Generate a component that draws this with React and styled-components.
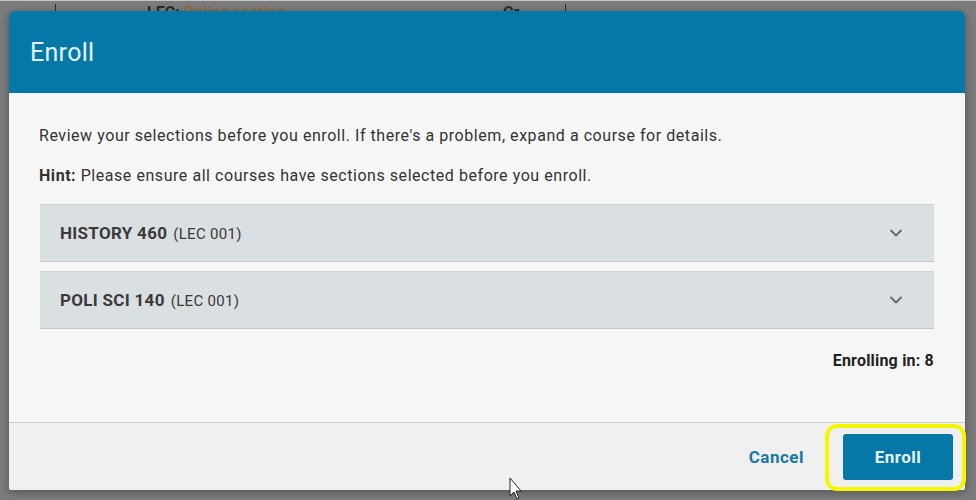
import React from 'react'
import styled, { createGlobalStyle } from 'styled-components'
import { ChevronDown } from 'lucide-react'

const GlobalStyle = createGlobalStyle`
  body {
    margin: 0;
    background: #7b7b7b;
    font-family: Roboto, "Liberation Sans", sans-serif;
  }
`

const Screen = styled.div`
  position: relative;
  width: 976px;
  height: 500px;
  overflow: hidden;
  background: #7c7c7c;
  border-top: 1px solid #c4c4c4;
  box-sizing: border-box;
`

const BehindRow = styled.div`
  display: grid;
  grid-template-columns: 55px 92px 356px 62px 1fr;
  height: 20px;
  padding-top: 3px;
  font-size: 16px;
  line-height: 18px;
`

const BehindCell = styled.div`
  border-left: ${p => (p.$line ? '1px solid #2e2e2e' : 'none')};
  color: #2a2a2a;
  font-weight: ${p => (p.$bold ? 700 : 400)};
  white-space: nowrap;
`

const Orange = styled.span`
  color: #9c6424;
  font-weight: 400;
`

const Dialog = styled.div`
  position: absolute;
  left: 9px;
  top: 10px;
  width: 956px;
  height: 479px;
  display: flex;
  flex-direction: column;
  border-radius: 6px 6px 2px 2px;
  overflow: hidden;
  box-shadow: 0 2px 10px rgba(0, 0, 0, 0.35);
`

const Header = styled.div`
  height: 82px;
  flex: none;
  display: flex;
  align-items: center;
  padding-left: 21px;
  background: #0578a8;
`

const Title = styled.h2`
  margin: 0;
  font-size: 25px;
  font-weight: 400;
  letter-spacing: 0.3px;
  color: #e4f3f9;
`

const Body = styled.div`
  flex: 1;
  background: #f7f7f7;
  padding: 33px 31px 0 30px;
  color: #333;
`

const Text = styled.p`
  margin: 0 0 ${p => p.$mb}px;
  font-size: 16px;
  line-height: 20px;
  letter-spacing: 0.55px;
`

const CourseList = styled.div`
  display: flex;
  flex-direction: column;
  gap: 9px;
  margin-left: 1px;
`

const CourseRow = styled.div`
  height: 58px;
  box-sizing: border-box;
  display: flex;
  align-items: center;
  justify-content: space-between;
  padding: 0 28px 0 20px;
  background: #dadfe2;
  border-top: 1px solid #cfd4d7;
  border-bottom: 1px solid #c3c8cb;
  color: #3a3a3a;
`

const CourseName = styled.span`
  font-size: 17px;
  font-weight: 700;
  letter-spacing: 0.3px;
  margin-right: 6px;
`

const Section = styled.span`
  font-size: 15px;
  font-weight: 400;
  letter-spacing: 0.3px;
`

const Count = styled.div`
  margin-top: 22px;
  text-align: right;
  font-size: 16px;
  font-weight: 700;
  letter-spacing: 0.2px;
  color: #222;
`

const Footer = styled.div`
  height: 67px;
  flex: none;
  display: flex;
  align-items: center;
  justify-content: flex-end;
  gap: 39px;
  padding-right: 12px;
  background: #f0f0f0;
  border-top: 1px solid #cfcfcf;
`

const LinkButton = styled.button`
  border: none;
  background: none;
  padding: 0;
  font-family: inherit;
  font-size: 17px;
  font-weight: 700;
  letter-spacing: 0.5px;
  color: #1b79a6;
`

const PrimaryButton = styled.button`
  width: 110px;
  height: 46px;
  border: none;
  border-radius: 3px;
  background: #0578a8;
  font-family: inherit;
  font-size: 17px;
  font-weight: 700;
  letter-spacing: 0.5px;
  color: #e6f4fa;
`

const Highlight = styled.div`
  position: absolute;
  left: 825px;
  top: 423px;
  width: 141px;
  height: 67px;
  box-sizing: border-box;
  border: 4px solid #f6f600;
  border-radius: 12px;
`

const Cursor = styled.svg`
  position: absolute;
  left: 509px;
  top: 476px;
`

const courses = [
  { name: 'HISTORY 460', section: 'LEC 001' },
  { name: 'POLI SCI 140', section: 'LEC 001' },
]

export default function App() {
  return (
    <>
      <GlobalStyle />
      <Screen>
        <BehindRow>
          <BehindCell />
          <BehindCell $line />
          <BehindCell $bold>
            LEC: <Orange>Online section</Orange>
          </BehindCell>
          <BehindCell $bold>Cr</BehindCell>
          <BehindCell $line />
        </BehindRow>

        <Dialog>
          <Header>
            <Title>Enroll</Title>
          </Header>
          <Body>
            <Text $mb={20}>
              Review your selections before you enroll. If there's a problem, expand a course for details.
            </Text>
            <Text $mb={18}>
              <b>Hint:</b> Please ensure all courses have sections selected before you enroll.
            </Text>
            <CourseList>
              {courses.map(c => (
                <CourseRow key={c.name}>
                  <span>
                    <CourseName>{c.name}</CourseName>
                    <Section>({c.section})</Section>
                  </span>
                  <ChevronDown size={20} strokeWidth={2.2} color="#666" />
                </CourseRow>
              ))}
            </CourseList>
            <Count>Enrolling in: 8</Count>
          </Body>
          <Footer>
            <LinkButton>Cancel</LinkButton>
            <PrimaryButton>Enroll</PrimaryButton>
          </Footer>
        </Dialog>

        <Highlight />
        <Cursor width="14" height="24" viewBox="0 0 14 24">
          <path d="M1 1 L1 19 L5 15 L8 22 L10 21 L7 14 L12 14 Z" fill="#fff" stroke="#222" strokeWidth="1" />
        </Cursor>
      </Screen>
    </>
  )
}
